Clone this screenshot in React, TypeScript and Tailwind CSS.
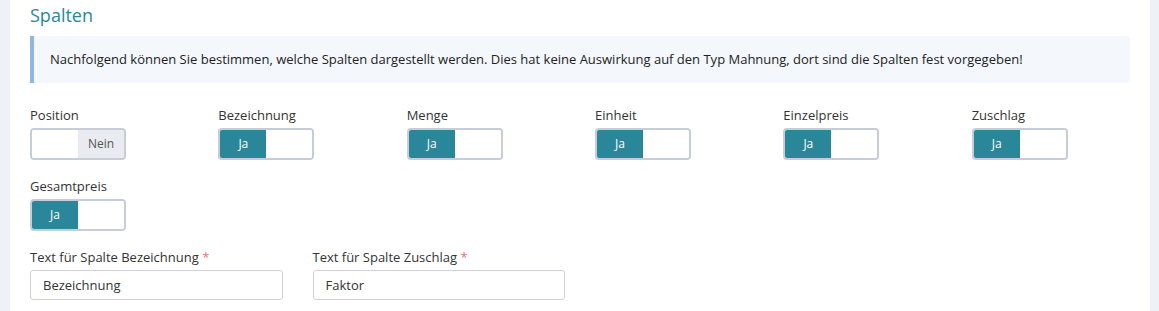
import { FC } from 'react';

type Column = { name: string; on: boolean };

const columns: Column[] = [
    { name: 'Position', on: false },
    { name: 'Bezeichnung', on: true },
    { name: 'Menge', on: true },
    { name: 'Einheit', on: true },
    { name: 'Einzelpreis', on: true },
    { name: 'Zuschlag', on: true },
    { name: 'Gesamtpreis', on: true },
];

const Toggle: FC<{ on: boolean }> = ({ on }) => (
    <div className="flex h-[32px] w-[96px] overflow-hidden rounded-[4px] border-2 border-[#c6cdd9] text-[12px]">
        {on ? (
            <>
                <div className="flex w-1/2 items-center justify-center bg-[#2a879a] text-white">Ja</div>
                <div className="w-1/2 bg-white" />
            </>
        ) : (
            <>
                <div className="w-1/2 bg-white" />
                <div className="flex w-1/2 items-center justify-center bg-[#e9ebf0] text-[#555]">Nein</div>
            </>
        )}
    </div>
);

const TextField: FC<{ label: string; value: string }> = ({ label, value }) => (
    <div className="flex flex-col">
        <label className="h-[18px] leading-[18px] text-[13px] text-[#333]">
            {label} <span className="text-[#e8707a]">*</span>
        </label>
        <input
            defaultValue={value}
            className="mt-[4px] h-[30px] rounded-[3px] border border-[#cfd3d9] px-[12px] text-[13px] text-[#333] outline-none"
        />
    </div>
);

export default function App() {
    return (
        <div
            className="flex h-[311px] w-full bg-white"
            style={{ fontFamily: '"Open Sans", "Noto Sans", sans-serif' }}
        >
            <div className="w-[10px] bg-[#eef1f6]" />
            <div className="flex-1 pl-[20px] pr-[20px]">
                <h2 className="mt-[3px] h-[24px] leading-[24px] text-[18px] text-[#2a879a]">Spalten</h2>
                <div className="mt-[9px] flex h-[47px] items-center rounded-r-[4px] border-l-[4px] border-[#8fb6e6] bg-[#f4f7fc] pl-[16px] text-[13px] text-[#222]">
                    Nachfolgend können Sie bestimmen, welche Spalten dargestellt werden. Dies hat keine Auswirkung auf den Typ Mahnung, dort sind die Spalten fest vorgegeben!
                </div>
                <div className="mt-[23px] grid grid-cols-6 gap-x-[30px] gap-y-[17px]">
                    {columns.map(c => (
                        <div key={c.name} className="flex flex-col">
                            <span className="h-[18px] leading-[18px] text-[13px] text-[#333]">{c.name}</span>
                            <div className="mt-[4px]">
                                <Toggle on={c.on} />
                            </div>
                        </div>
                    ))}
                </div>
                <div className="mt-[17px] grid grid-cols-4 gap-x-[30px]">
                    <TextField label="Text für Spalte Bezeichnung" value="Bezeichnung" />
                    <TextField label="Text für Spalte Zuschlag" value="Faktor" />
                </div>
            </div>
            <div className="w-[9px] bg-[#eef1f6]" />
        </div>
    );
}
